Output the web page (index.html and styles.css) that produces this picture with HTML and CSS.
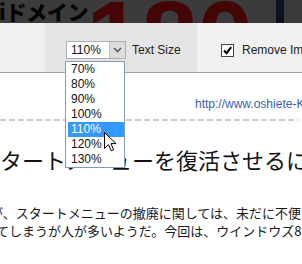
FILE: index.html
```html
<!DOCTYPE html>
<html lang="ja">
<head>
<meta charset="utf-8">
<link rel="stylesheet" href="styles.css">
</head>
<body>
<div class="page">
  <div class="ad">
    <span class="ad-jp">iドメイン</span>
    <span class="ad-num">180</span>
    <span class="ad-bar"></span>
  </div>
  <div class="toolbar">
    <div class="tb-left"></div>
    <div class="tb-panel">
      <div class="select">
        <span class="select-val">110%</span>
        <span class="select-btn"><svg width="9" height="6" viewBox="0 0 9 6"><path d="M1 1 L4.5 4.5 L8 1" fill="none" stroke="#5a5a5a" stroke-width="1.6"/></svg></span>
      </div>
      <span class="label">Text Size</span>
    </div>
    <div class="tb-right">
      <span class="checkbox"><svg width="11" height="11" viewBox="0 0 11 11"><path d="M2 5.5 L4.5 8.2 L9.2 2.2" fill="none" stroke="#000" stroke-width="2"/></svg></span>
      <span class="label">Remove Images</span>
    </div>
  </div>
  <div class="content">
    <div class="url">http://www.oshiete-K.com/</div>
    <div class="dash"></div>
    <h1 class="title">スタートメニューを復活させるには</h1>
    <p class="line l1">が、スタートメニューの撤廃に関しては、未だに不便</p>
    <p class="line l2">てしまうが人が多いようだ。今回は、ウインドウズ8に</p>
  </div>
  <ul class="dropdown">
    <li class="opt">70%</li>
    <li class="opt">80%</li>
    <li class="opt">90%</li>
    <li class="opt">100%</li>
    <li class="opt sel">110%</li>
    <li class="opt">120%</li>
    <li class="opt">130%</li>
  </ul>
  <svg class="cursor" width="13" height="20" viewBox="0 0 13 20"><path d="M0.5 0.5 L0.5 16.5 L4.5 12.5 L7.2 18.8 L9.6 17.8 L7 11.6 L12 11.6 Z" fill="#fff" stroke="#000" stroke-width="1" stroke-linejoin="miter"/></svg>
</div>
</body>
</html>
```
FILE: styles.css
```css
* { box-sizing: border-box; }
html, body { margin: 0; padding: 0; background: #fff; }
.page {
  position: relative;
  width: 302px;
  height: 264px;
  overflow: hidden;
  font-family: "Liberation Sans", Arial, sans-serif;
}
.ad {
  display: flex;
  align-items: flex-start;
  height: 23px;
  background: #3b3b3b;
  overflow: hidden;
}
.ad-jp {
  font-family: "Noto Sans CJK JP", sans-serif;
  font-weight: 900;
  font-size: 21px;
  line-height: 22px;
  color: #050505;
  margin-left: -1px;
  white-space: nowrap;
  letter-spacing: -0.3px;
  flex: none;
}
.ad-num {
  font-family: "Liberation Sans", Arial, sans-serif;
  font-weight: bold;
  font-size: 100px;
  line-height: 100px;
  margin-top: -14px;
  margin-left: -2px;
  color: #440505;
  white-space: nowrap;
  flex: none;
}
.ad-bar {
  margin-left: auto;
  margin-right: 18px;
  width: 8px;
  height: 23px;
  background: #0c1220;
  flex: none;
}
.toolbar {
  display: flex;
  height: 50px;
  border-bottom: 1px solid #a3a3a3;
}
.tb-left {
  width: 45px;
  background: #f0f0f0;
}
.tb-panel {
  width: 152px;
  background: #e4e4e4;
  display: flex;
  align-items: center;
  padding: 5px 0 0 21px;
}
.tb-right {
  flex: 1;
  background: #f1f1f1;
  display: flex;
  align-items: center;
  padding: 5px 0 0 24px;
  white-space: nowrap;
  overflow: hidden;
}
.select {
  display: flex;
  width: 60px;
  height: 18px;
  border: 1px solid #a9afb8;
  background: #fff;
  flex: none;
}
.select-val {
  flex: 1;
  font-size: 12px;
  line-height: 16px;
  padding-left: 4px;
  color: #111;
}
.select-btn {
  width: 16px;
  background: #dcdcdc;
  border-left: 1px solid #c4c4c4;
  display: flex;
  align-items: center;
  justify-content: center;
}
.label {
  font-size: 12px;
  color: #222;
  margin-left: 6px;
  white-space: nowrap;
}
.checkbox {
  width: 13px;
  height: 13px;
  border: 1px solid #444;
  background: #fff;
  display: flex;
  align-items: center;
  justify-content: center;
  flex: none;
  margin-right: 2px;
}
.content {
  padding-top: 24px;
}
.url {
  padding-left: 195px;
  font-size: 12px;
  line-height: 14px;
  color: #3a5fb0;
  white-space: nowrap;
  overflow: hidden;
}
.dash {
  margin-top: 8px;
  height: 2px;
  width: 298px;
  background-image: repeating-linear-gradient(90deg, #cccccc 0 6px, transparent 6px 9px);
}
.title {
  margin: 23px 0 0 -22px;
  font-family: "Noto Sans CJK JP", serif;
  font-weight: normal;
  font-size: 22px;
  line-height: 30px;
  color: #111;
  white-space: nowrap;
}
.line {
  margin: 0;
  font-family: "Noto Sans CJK JP", sans-serif;
  font-size: 13px;
  line-height: 18px;
  color: #1a1a1a;
  white-space: nowrap;
}
.l1 { margin-top: 30px; margin-left: -10px; }
.l2 { margin-left: -4px; }
.dropdown {
  position: absolute;
  top: 61px;
  left: 65px;
  width: 60px;
  margin: 0;
  padding: 0;
  list-style: none;
  background: #fff;
  border: 1px solid #7f9db9;
}
.opt {
  height: 15px;
  line-height: 15px;
  font-size: 12px;
  color: #111;
  margin-left: 2px;
  padding-left: 3px;
}
.opt.sel {
  background: #3399ff;
  color: #fff;
}
.cursor {
  position: absolute;
  left: 104px;
  top: 132px;
}
```
